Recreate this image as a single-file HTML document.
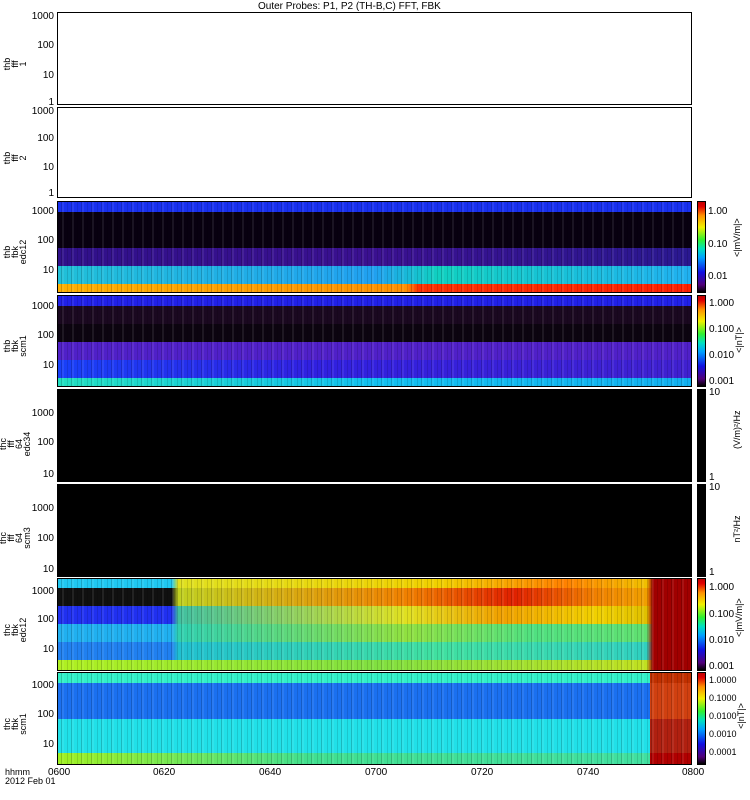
<!DOCTYPE html><html><head><style>
body{margin:0;width:750px;height:800px;background:#fff;position:relative;overflow:hidden;font-family:"Liberation Sans",sans-serif;font-size:10px;color:#000}
.a{position:absolute}
.p{position:absolute;left:57px;width:635px;border:1px solid #000;box-sizing:border-box;background:#fff}
.b{position:absolute;left:0;width:100%}
.s{position:absolute;left:0;top:0;width:100%;height:100%;background:repeating-linear-gradient(90deg,rgba(0,0,0,0) 0 3px,rgba(0,0,0,.18) 3px 4px,rgba(255,255,255,.08) 4px 6px,rgba(0,0,0,0) 6px 9px,rgba(0,0,0,.12) 9px 10px)}
.yl{position:absolute;width:50px;text-align:right;font-size:10px}
.lab{position:absolute;font-size:9px;line-height:8px;text-align:center;transform:rotate(-90deg);transform-origin:center}
.cb{position:absolute;left:697px;width:9px;border:1px solid #000;box-sizing:border-box;background:linear-gradient(to top,#000 0%,#50007a 8%,#1010e0 22%,#00a0ff 38%,#00e0c0 48%,#30f030 58%,#f0f000 72%,#ff9000 85%,#e00000 95%,#c00000 100%)}
.cl{position:absolute;left:709px;font-size:10px}
.tx{position:absolute;font-size:10px}
</style></head><body>
<div class="tx" style="left:258px;top:1px">Outer Probes: P1, P2 (TH-B,C) FFT, FBK</div>

<div class="p" style="top:12px;height:93px"></div>
<div class="yl" style="left:4px;top:11px">1000</div><div class="yl" style="left:4px;top:40px">100</div><div class="yl" style="left:4px;top:70px">10</div><div class="yl" style="left:4px;top:97px">1</div>
<div class="lab" style="left:0px;top:52px;width:30px">thb<br>fff<br>1</div>
<div class="p" style="top:107px;height:91px"></div>
<div class="yl" style="left:4px;top:106px">1000</div><div class="yl" style="left:4px;top:133px">100</div><div class="yl" style="left:4px;top:162px">10</div><div class="yl" style="left:4px;top:188px">1</div>
<div class="lab" style="left:0px;top:146px;width:30px">thb<br>fff<br>2</div>

<div class="p" style="top:201px;height:92px;overflow:hidden">
<div class="b" style="top:0;height:10px;background:#1830f0"></div>
<div class="b" style="top:10px;height:36px;background:#080010"></div>
<div class="b" style="top:46px;height:18px;background:linear-gradient(90deg,#30108a,#3a1090 50%,#2a1890)"></div>
<div class="b" style="top:64px;height:18px;background:linear-gradient(90deg,#20c0d8,#20a0f0 50%,#10d0c0 60%,#20b0f0)"></div>
<div class="b" style="top:82px;height:10px;background:linear-gradient(90deg,#ffb000,#ff9000 55%,#ff3000 57%,#ff2000)"></div>
<div class="s"></div></div>
<div class="yl" style="left:4px;top:206px">1000</div><div class="yl" style="left:4px;top:235px">100</div><div class="yl" style="left:4px;top:265px">10</div>
<div class="lab" style="left:-2px;top:240px;width:34px">thb<br>fbk<br>edc12</div>
<div class="cb" style="top:201px;height:92px"></div>
<div class="cl" style="left:708px;top:206px">1.00</div><div class="cl" style="left:708px;top:239px">0.10</div><div class="cl" style="left:708px;top:271px">0.01</div>
<div class="lab" style="left:722px;top:238px;width:30px">&lt;|mV/m|&gt;</div>

<div class="p" style="top:295px;height:92px;overflow:hidden">
<div class="b" style="top:0;height:10px;background:#2020e8"></div>
<div class="b" style="top:10px;height:18px;background:#1a0820"></div>
<div class="b" style="top:28px;height:18px;background:#0c0410"></div>
<div class="b" style="top:46px;height:18px;background:#5020c8"></div>
<div class="b" style="top:64px;height:18px;background:linear-gradient(90deg,#1840f8,#3020e0 40%,#4020d0)"></div>
<div class="b" style="top:82px;height:10px;background:linear-gradient(90deg,#20e0c0,#10c0f0 50%,#10b0f0)"></div>
<div class="s"></div></div>
<div class="yl" style="left:4px;top:301px">1000</div><div class="yl" style="left:4px;top:330px">100</div><div class="yl" style="left:4px;top:360px">10</div>
<div class="lab" style="left:-2px;top:334px;width:34px">thb<br>fbk<br>scm1</div>
<div class="cb" style="top:295px;height:92px"></div>
<div class="cl" style="top:298px">1.000</div><div class="cl" style="top:324px">0.100</div><div class="cl" style="top:350px">0.010</div><div class="cl" style="top:376px">0.001</div>
<div class="lab" style="left:724px;top:336px;width:30px">&lt;|nT|&gt;</div>

<div class="p" style="top:389px;height:93px;background:#000"></div>
<div class="yl" style="left:4px;top:408px">1000</div><div class="yl" style="left:4px;top:437px">100</div><div class="yl" style="left:4px;top:469px">10</div>
<div class="lab" style="left:-2px;top:428px;width:34px">thc<br>fff<br>64<br>edc34</div>
<div class="cb" style="top:389px;height:93px;background:#000"></div>
<div class="cl" style="top:387px">10</div><div class="cl" style="top:472px">1</div>
<div class="lab" style="left:722px;top:430px;width:30px">(V/m)²/Hz</div>

<div class="p" style="top:484px;height:93px;background:#000"></div>
<div class="yl" style="left:4px;top:503px">1000</div><div class="yl" style="left:4px;top:533px">100</div><div class="yl" style="left:4px;top:564px">10</div>
<div class="lab" style="left:-2px;top:522px;width:34px">thc<br>fff<br>64<br>scm3</div>
<div class="cb" style="top:484px;height:93px;background:#000"></div>
<div class="cl" style="top:482px">10</div><div class="cl" style="top:567px">1</div>
<div class="lab" style="left:722px;top:525px;width:30px">nT²/Hz</div>

<div class="p" style="top:578px;height:93px;overflow:hidden">
<div class="b" style="top:0;height:9px;background:linear-gradient(90deg,#20c8f0 0 18%,#e0e020 19%,#f0d000 60%,#ff8000 80%,#f0c000 93%,#a00000 94%)"></div>
<div class="b" style="top:9px;height:18px;background:linear-gradient(90deg,#101010 0 18%,#c0d020 19%,#f08000 55%,#e02000 72%,#f08000 85%,#f0a000 93%,#a00000 94%)"></div>
<div class="b" style="top:27px;height:18px;background:linear-gradient(90deg,#2030f0 0 18%,#40c0a0 19%,#e0e020 55%,#f0a000 70%,#f0d000 85%,#e0c000 93%,#a00000 94%)"></div>
<div class="b" style="top:45px;height:18px;background:linear-gradient(90deg,#20b0f0 0 18%,#30d0b0 19%,#90e040 55%,#50e080 75%,#60e070 93%,#a00000 94%)"></div>
<div class="b" style="top:63px;height:18px;background:linear-gradient(90deg,#2080f0 0 18%,#20c0d0 19%,#40e0a0 60%,#30d0c0 93%,#a00000 94%)"></div>
<div class="b" style="top:81px;height:12px;background:linear-gradient(90deg,#b0f020,#80e040 50%,#c0e020 93%,#a00000 94%)"></div>
<div class="s"></div></div>
<div class="yl" style="left:4px;top:586px">1000</div><div class="yl" style="left:4px;top:614px">100</div><div class="yl" style="left:4px;top:644px">10</div>
<div class="lab" style="left:-2px;top:618px;width:34px">thc<br>fbk<br>edc12</div>
<div class="cb" style="top:578px;height:93px"></div>
<div class="cl" style="top:582px">1.000</div><div class="cl" style="top:609px">0.100</div><div class="cl" style="top:635px">0.010</div><div class="cl" style="top:661px">0.001</div>
<div class="lab" style="left:724px;top:618px;width:30px">&lt;|mV/m|&gt;</div>

<div class="p" style="top:672px;height:93px;overflow:hidden">
<div class="b" style="top:0;height:10px;background:linear-gradient(90deg,#30f0c8 0 93.5%,#c03000 93.5%)"></div>
<div class="b" style="top:10px;height:36px;background:linear-gradient(90deg,#1a70f0 0 93.5%,#d04010 93.5%)"></div>
<div class="b" style="top:46px;height:36px;background:linear-gradient(90deg,#20e0e8 0 93.5%,#b02010 93.5%)"></div>
<div class="b" style="top:80px;height:13px;background:linear-gradient(90deg,#a0f020,#40e090 40%,#40e0a0 93.5%,#b00000 93.5%)"></div>
<div class="s"></div></div>
<div class="yl" style="left:4px;top:680px">1000</div><div class="yl" style="left:4px;top:709px">100</div><div class="yl" style="left:4px;top:739px">10</div>
<div class="lab" style="left:-2px;top:712px;width:34px">thc<br>fbk<br>scm1</div>
<div class="cb" style="top:672px;height:93px"></div>
<div class="cl" style="top:675px;font-size:9px">1.0000</div><div class="cl" style="top:693px;font-size:9px">0.1000</div><div class="cl" style="top:711px;font-size:9px">0.0100</div><div class="cl" style="top:729px;font-size:9px">0.0010</div><div class="cl" style="top:747px;font-size:9px">0.0001</div>
<div class="lab" style="left:726px;top:712px;width:30px">&lt;|nT|&gt;</div>

<div class="tx" style="left:5px;top:768px;font-size:9px;line-height:9px">hhmm<br>2012 Feb 01</div>
<div class="tx" style="left:48px;top:767px">0600</div><div class="tx" style="left:153px;top:767px">0620</div><div class="tx" style="left:259px;top:767px">0640</div><div class="tx" style="left:365px;top:767px">0700</div><div class="tx" style="left:471px;top:767px">0720</div><div class="tx" style="left:577px;top:767px">0740</div><div class="tx" style="left:682px;top:767px">0800</div>
</body></html>
